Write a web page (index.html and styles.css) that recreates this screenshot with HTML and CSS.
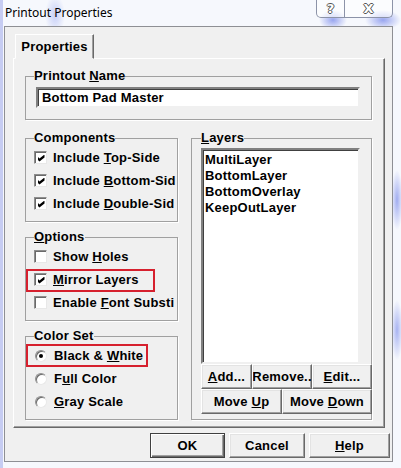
FILE: index.html
```html
<!DOCTYPE html>
<html lang="en">
<head>
  <meta charset="UTF-8" />
  <title>Printout Properties</title>
  <link rel="stylesheet" href="styles.css">
</head>
<body>
  <div class="titlebar">
    <span class="title">Printout Properties</span>
    <div class="caption-btns">
      <span class="cap help-cap">?</span>
      <span class="cap close-cap">X</span>
    </div>
  </div>

  <div class="client">
    <div class="tabs">
      <div class="tab active">Properties</div>
    </div>

    <div class="panel">
      <fieldset class="group name-group">
        <legend>Printout <u>N</u>ame</legend>
        <div class="textbox">Bottom Pad Master</div>
      </fieldset>

      <div class="columns">
        <div class="left-col">
          <fieldset class="group">
            <legend>Components</legend>
            <div class="row"><span class="check on"></span><span class="label">Include <u>T</u>op-Side</span></div>
            <div class="row"><span class="check on"></span><span class="label">Include <u>B</u>ottom-Sid</span></div>
            <div class="row"><span class="check on"></span><span class="label">Include <u>D</u>ouble-Sid</span></div>
          </fieldset>

          <fieldset class="group">
            <legend><u>O</u>ptions</legend>
            <div class="row"><span class="check"></span><span class="label">Show <u>H</u>oles</span></div>
            <div class="row marked mark-mirror"><span class="check on"></span><span class="label"><u>M</u>irror Layers</span></div>
            <div class="row"><span class="check"></span><span class="label">Enable <u>F</u>ont Substi</span></div>
          </fieldset>

          <fieldset class="group">
            <legend>Color Set</legend>
            <div class="row marked mark-bw"><span class="radio on"></span><span class="label">Black &amp; <u>W</u>hite</span></div>
            <div class="row"><span class="radio"></span><span class="label">F<u>u</u>ll Color</span></div>
            <div class="row"><span class="radio"></span><span class="label"><u>G</u>ray Scale</span></div>
          </fieldset>
        </div>

        <fieldset class="group layers-group">
          <legend><u>L</u>ayers</legend>
          <div class="listbox">
            <div>MultiLayer</div>
            <div>BottomLayer</div>
            <div>BottomOverlay</div>
            <div>KeepOutLayer</div>
          </div>
          <div class="btn-row">
            <button class="btn w-add"><span><u>A</u>dd...</span></button>
            <button class="btn w-remove"><span>Remove..</span></button>
            <button class="btn w-edit"><span><u>E</u>dit...</span></button>
          </div>
          <div class="btn-row">
            <button class="btn w-up"><span>Move <u>U</u>p</span></button>
            <button class="btn w-down"><span>Move <u>D</u>own</span></button>
          </div>
        </fieldset>
      </div>
    </div>

    <div class="actions">
      <button class="btn default w-ok"><span>OK</span></button>
      <button class="btn w-cancel"><span>Cancel</span></button>
      <button class="btn w-help"><span><u>H</u>elp</span></button>
    </div>
  </div>
</body>
</html>
```

FILE: styles.css
```css
html, body {
  margin: 0;
  padding: 0;
}

body {
  width: 401px;
  height: 468px;
  overflow: hidden;
  font-family: 'Liberation Sans', Arial, sans-serif;
  font-size: 13px;
  font-weight: bold;
  letter-spacing: 0.2px;
  color: #000;
  background:
    radial-gradient(circle at 246px 40px, rgba(80, 100, 230, 0.75) 0, rgba(80, 100, 230, 0) 9px),
    radial-gradient(ellipse 8px 22px at 302px 50px, rgba(120, 140, 235, 0.45) 0, rgba(120, 140, 235, 0) 100%),
    radial-gradient(ellipse 14px 10px at 333px 20px, rgba(90, 110, 230, 0.6) 0, rgba(90, 110, 230, 0) 100%),
    radial-gradient(ellipse 18px 10px at 383px 20px, rgba(90, 110, 230, 0.6) 0, rgba(90, 110, 230, 0) 100%),
    radial-gradient(ellipse 6px 30px at 397px 200px, rgba(90, 110, 230, 0.55) 0, rgba(90, 110, 230, 0) 100%),
    radial-gradient(ellipse 6px 30px at 397px 330px, rgba(90, 110, 230, 0.5) 0, rgba(90, 110, 230, 0) 100%),
    radial-gradient(ellipse 10px 20px at 55px 15px, rgba(110, 130, 235, 0.35) 0, rgba(110, 130, 235, 0) 100%),
    linear-gradient(to right, #c6ccf2 0, #c6ccf2 3px, transparent 3px),
    #f6f8fd;
}

/* Barra de título */
.titlebar {
  height: 26px;
  display: flex;
  justify-content: space-between;
  align-items: flex-start;
}

.title {
  font-family: 'Noto Sans', 'Open Sans', sans-serif;
  font-weight: normal;
  font-size: 12px;
  letter-spacing: 0;
  margin: 4px 0 0 5px;
}

.caption-btns {
  display: flex;
  margin-right: 8px;
  margin-top: -1px;
  height: 18px;
  border: 1px solid #8c93a8;
  border-top: none;
  border-radius: 0 0 5px 5px;
  background: rgba(255, 255, 255, 0.55);
}

.cap {
  display: flex;
  align-items: center;
  justify-content: center;
  font-family: 'DejaVu Sans', sans-serif;
  font-size: 13px;
  color: #fff;
  text-shadow: -1px 0 #555, 1px 0 #555, 0 -1px #555, 0 1px #555;
}

.help-cap {
  width: 27px;
  border-right: 1px solid #8c93a8;
}

.close-cap {
  width: 47px;
}

/* Área de cliente */
.client {
  margin-left: 4px;
  width: 387px;
  height: 434px;
  border: 1px solid #8e8f94;
  background: #f0f0f0;
}

.tabs {
  display: flex;
  padding: 6px 0 0 10px;
}

.tab {
  height: 23px;
  width: 77px;
  display: flex;
  align-items: center;
  justify-content: center;
  border: 1px solid;
  border-color: #fff #696969 transparent #fff;
  box-shadow: inset -1px 0 #a0a0a0;
  background: #f0f0f0;
  position: relative;
  top: 1px;
}

.panel {
  margin-left: 8px;
  width: 347px;
  height: 359px;
  padding: 9px 12px 0 11px;
  border: 1px solid;
  border-color: #fff #696969 #696969 #fff;
  box-shadow: inset -1px -1px #a0a0a0;
}

/* Cajas de grupo */
.group {
  margin: 0;
  padding: 0 1px 6px 8px;
  border: 1px solid #a0a0a0;
  box-shadow: 1px 1px 0 #fff;
  min-width: 0;
}

.group legend {
  padding: 0;
  height: 16px;
  line-height: 16px;
}

.name-group {
  padding: 3px 11px 11px 8px;
}

.textbox {
  margin-left: 2px;
  height: 17px;
  line-height: 17px;
  padding: 0 4px;
  background: #fff;
  border: 2px solid;
  border-color: #808080 #f0f0f0 #f0f0f0 #808080;
  box-shadow: inset 1px 1px #404040;
}

.columns {
  display: grid;
  grid-template-columns: 153px 181px;
  column-gap: 13px;
  margin-top: 10px;
}

.left-col {
  display: flex;
  flex-direction: column;
  gap: 7px;
}

.row {
  height: 23px;
  display: flex;
  align-items: center;
  gap: 6px;
  white-space: nowrap;
  position: relative;
}

.check {
  flex: none;
  width: 11px;
  height: 11px;
  background: #fff;
  border: 1px solid;
  border-color: #8e8e8e #e8e8e8 #e8e8e8 #8e8e8e;
  box-shadow: inset 1px 1px #6a6a6a;
  display: flex;
  align-items: center;
  justify-content: center;
}

.check.on::after {
  content: '';
  width: 7px;
  height: 7px;
  background: #000;
  clip-path: polygon(0 28%, 28% 57%, 100% 0, 100% 43%, 28% 100%, 0 71%);
  margin: 1px 0 0 1px;
}

.radio {
  flex: none;
  width: 10px;
  height: 10px;
  margin-left: 1px;
  margin-right: 1px;
  border-radius: 50%;
  background: #fff;
  border: 1px solid;
  border-color: #8e8e8e #e8e8e8 #e8e8e8 #8e8e8e;
  box-shadow: inset 1px 1px #6a6a6a;
  display: flex;
  align-items: center;
  justify-content: center;
}

.radio.on::after {
  content: '';
  width: 4px;
  height: 4px;
  border-radius: 50%;
  background: #000;
}

/* Marcos rojos de anotación */
.marked::before {
  content: '';
  position: absolute;
  top: 0;
  left: -8px;
  height: 19px;
  border: 2px solid #d6202e;
}

.mark-mirror::before {
  width: 125px;
  top: 1px;
}

.mark-bw::before {
  width: 118px;
  top: 0;
}

/* Capas */
.layers-group {
  padding: 0 0 2px 9px;
}

.listbox {
  margin-top: 2px;
  width: 151px;
  height: 208px;
  padding: 2px;
  background: #fff;
  border: 2px solid;
  border-color: #808080 #f0f0f0 #f0f0f0 #808080;
  box-shadow: inset 1px 1px #404040;
  line-height: 16px;
}

.btn-row {
  display: flex;
  margin-right: -1px;
}

.btn-row:first-of-type {
  margin-top: 3px;
}

.btn {
  height: 25px;
  padding: 0;
  font: inherit;
  letter-spacing: inherit;
  color: #000;
  background: #f0f0f0;
  border: 1px solid;
  border-color: #fff #696969 #696969 #fff;
  box-shadow: inset -1px -1px #a0a0a0, inset 1px 1px #e3e3e3;
  display: flex;
  align-items: center;
  justify-content: center;
  white-space: nowrap;
  overflow: hidden;
}

.w-add { width: 51px; }
.w-remove { width: 60px; }
.w-edit { width: 60px; }
.w-up { width: 81px; }
.w-down { width: 90px; }

.actions {
  display: flex;
  gap: 4px;
  margin: 5px 0 0 145px;
}

.btn.default {
  border-color: #404040;
  box-shadow: inset 1px 1px #fff, inset -1px -1px #696969, inset -2px -2px #a0a0a0;
}

.w-ok { width: 75px; }
.w-cancel { width: 76px; }
.w-help { width: 81px; }
```
